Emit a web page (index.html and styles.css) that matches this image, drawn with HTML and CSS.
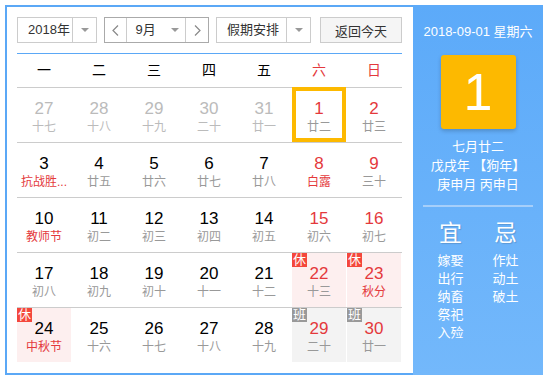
FILE: index.html
```html
<!DOCTYPE html>
<html lang="zh-CN">
<head>
    <meta charset="UTF-8">
    <meta name="viewport" content="width=device-width, initial-scale=1.0">
    <title>万年历</title>
    <link rel="stylesheet" href="styles.css">
</head>
<body>
    <div class="calendar">
        <div class="main">
            <div class="toolbar">
                <div class="select year">
                    <span class="select-text">2018年</span>
                    <span class="select-arrow"><i class="caret"></i></span>
                </div>
                <div class="select month">
                    <span class="month-btn prev"><svg width="7" height="11" viewBox="0 0 7 11"><polyline points="6,0.5 1,5.5 6,10.5"/></svg></span>
                    <span class="month-text">9月</span>
                    <span class="month-arrow"><i class="caret"></i></span>
                    <span class="month-btn next"><svg width="7" height="11" viewBox="0 0 7 11"><polyline points="1,0.5 6,5.5 1,10.5"/></svg></span>
                </div>
                <div class="select holiday">
                    <span class="select-text">假期安排</span>
                    <span class="select-arrow"><i class="caret"></i></span>
                </div>
                <button class="today-btn">返回今天</button>
            </div>

            <div class="weekdays">
                <span>一</span><span>二</span><span>三</span><span>四</span><span>五</span>
                <span class="red">六</span><span class="red">日</span>
            </div>

            <div class="week">
                <div class="day other"><div class="num">27</div><div class="lunar">十七</div></div>
                <div class="day other"><div class="num">28</div><div class="lunar">十八</div></div>
                <div class="day other"><div class="num">29</div><div class="lunar">十九</div></div>
                <div class="day other"><div class="num">30</div><div class="lunar">二十</div></div>
                <div class="day other"><div class="num">31</div><div class="lunar">廿一</div></div>
                <div class="day weekend today"><div class="num">1</div><div class="lunar">廿二</div></div>
                <div class="day weekend"><div class="num">2</div><div class="lunar">廿三</div></div>
            </div>
            <div class="week">
                <div class="day"><div class="num">3</div><div class="lunar fest">抗战胜...</div></div>
                <div class="day"><div class="num">4</div><div class="lunar">廿五</div></div>
                <div class="day"><div class="num">5</div><div class="lunar">廿六</div></div>
                <div class="day"><div class="num">6</div><div class="lunar">廿七</div></div>
                <div class="day"><div class="num">7</div><div class="lunar">廿八</div></div>
                <div class="day weekend"><div class="num">8</div><div class="lunar fest">白露</div></div>
                <div class="day weekend"><div class="num">9</div><div class="lunar">三十</div></div>
            </div>
            <div class="week">
                <div class="day"><div class="num">10</div><div class="lunar fest">教师节</div></div>
                <div class="day"><div class="num">11</div><div class="lunar">初二</div></div>
                <div class="day"><div class="num">12</div><div class="lunar">初三</div></div>
                <div class="day"><div class="num">13</div><div class="lunar">初四</div></div>
                <div class="day"><div class="num">14</div><div class="lunar">初五</div></div>
                <div class="day weekend"><div class="num">15</div><div class="lunar">初六</div></div>
                <div class="day weekend"><div class="num">16</div><div class="lunar">初七</div></div>
            </div>
            <div class="week">
                <div class="day"><div class="num">17</div><div class="lunar">初八</div></div>
                <div class="day"><div class="num">18</div><div class="lunar">初九</div></div>
                <div class="day"><div class="num">19</div><div class="lunar">初十</div></div>
                <div class="day"><div class="num">20</div><div class="lunar">十一</div></div>
                <div class="day"><div class="num">21</div><div class="lunar">十二</div></div>
                <div class="day weekend rest"><span class="badge">休</span><div class="num">22</div><div class="lunar">十三</div></div>
                <div class="day weekend rest"><span class="badge">休</span><div class="num">23</div><div class="lunar fest">秋分</div></div>
            </div>
            <div class="week">
                <div class="day rest"><span class="badge">休</span><div class="num">24</div><div class="lunar fest">中秋节</div></div>
                <div class="day"><div class="num">25</div><div class="lunar">十六</div></div>
                <div class="day"><div class="num">26</div><div class="lunar">十七</div></div>
                <div class="day"><div class="num">27</div><div class="lunar">十八</div></div>
                <div class="day"><div class="num">28</div><div class="lunar">十九</div></div>
                <div class="day weekend work"><span class="badge">班</span><div class="num">29</div><div class="lunar">二十</div></div>
                <div class="day weekend work"><span class="badge">班</span><div class="num">30</div><div class="lunar">廿一</div></div>
            </div>
        </div>

        <div class="side">
            <div class="side-date">2018-09-01 星期六</div>
            <div class="big-day">1</div>
            <div class="side-info">
                <div>七月廿二</div>
                <div>戊戌年 【狗年】</div>
                <div>庚申月 丙申日</div>
            </div>
            <div class="divider"></div>
            <div class="yiji">
                <div class="yiji-col">
                    <div class="yiji-title">宜</div>
                    <div>嫁娶</div>
                    <div>出行</div>
                    <div>纳畜</div>
                    <div>祭祀</div>
                    <div>入殓</div>
                </div>
                <div class="yiji-col">
                    <div class="yiji-title">忌</div>
                    <div>作灶</div>
                    <div>动土</div>
                    <div>破土</div>
                </div>
            </div>
        </div>
    </div>
</body>
</html>
```

FILE: styles.css
```css
body {
    margin: 5px;
    padding: 0;
    font-family: "Liberation Sans", "Noto Sans CJK SC", sans-serif;
    background-color: #fff;
    color: #000;
}
.calendar {
    display: flex;
    width: 538px;
    height: 370px;
    box-sizing: border-box;
    border: 2px solid #5ba8f6;
}
.main {
    width: 406px;
    padding: 10px 11px 0 10px;
    box-sizing: border-box;
}

/* 顶部工具栏 */
.toolbar {
    display: flex;
    height: 26px;
    font-size: 13px;
    color: #333;
}
.select {
    display: flex;
    height: 26px;
    box-sizing: border-box;
    border: 1px solid #ccc;
    line-height: 24px;
    background-color: #fff;
}
.select-text {
    flex: none;
    padding-left: 10px;
    box-sizing: border-box;
    border-right: 1px solid #ccc;
    white-space: nowrap;
    overflow: hidden;
}
.select-arrow {
    display: flex;
    align-items: center;
    justify-content: center;
    flex: 1;
}
.caret {
    display: block;
    width: 0;
    height: 0;
    border-top: 4px solid #999;
    border-left: 4px solid transparent;
    border-right: 4px solid transparent;
}
.year {
    width: 80px;
}
.year .select-text {
    width: 55px;
}
.month {
    width: 105px;
    margin-left: 7px;
    border-color: #aaa;
}
.month-btn {
    display: flex;
    align-items: center;
    justify-content: center;
    width: 21px;
}
.month-btn svg {
    fill: none;
    stroke: #888;
    stroke-width: 1.2;
}
.prev {
    border-right: 1px solid #ccc;
}
.next {
    border-left: 1px solid #ccc;
    width: 22px;
}
.month-text {
    width: 38px;
    text-align: center;
}
.month-arrow {
    display: flex;
    align-items: center;
    justify-content: center;
    width: 21px;
}
.holiday {
    width: 95px;
    margin-left: 7px;
}
.holiday .select-text {
    width: 70px;
}
.today-btn {
    width: 82px;
    height: 26px;
    margin-left: 9px;
    padding: 0;
    border: 1px solid #ccc;
    background-color: #f5f5f5;
    font-family: inherit;
    font-size: 13px;
    color: #333;
}

/* 日历表格 */
.weekdays {
    display: grid;
    grid-template-columns: repeat(7, 54px);
    column-gap: 1px;
    margin-top: 10px;
    border-top: 1px solid #5ba8f6;
    height: 33px;
    line-height: 33px;
    text-align: center;
    font-size: 14px;
}
.red {
    color: #e4393c;
}
.week {
    display: grid;
    grid-template-columns: repeat(7, 54px);
    column-gap: 1px;
    border-top: 1px solid #ccc;
}
.day {
    position: relative;
    height: 54px;
    padding-top: 11px;
    box-sizing: border-box;
    text-align: center;
}
.num {
    font-size: 17px;
    line-height: 20px;
}
.lunar {
    font-size: 12px;
    line-height: 16px;
    color: #999;
    white-space: nowrap;
}
.weekend .num {
    color: #e4393c;
}
.lunar.fest {
    color: #e4393c;
}
.other .num,
.other .lunar {
    color: #bbb;
}
.rest {
    background-color: #fdefef;
}
.work {
    background-color: #f3f3f3;
}
.badge {
    position: absolute;
    left: 0;
    top: 0;
    width: 15px;
    height: 14px;
    font-size: 13px;
    line-height: 14px;
    color: #fff;
    background-color: #f4473c;
}
.work .badge {
    background-color: #999;
}
.today::after {
    content: "";
    position: absolute;
    left: 0;
    right: 0;
    top: -1px;
    bottom: 0;
    border: 4px solid #fdb900;
}

/* 右侧详情 */
.side {
    width: 130px;
    margin: -2px -2px -2px 0;
    padding-top: 17px;
    box-sizing: border-box;
    background: linear-gradient(#5caaf9, #73b8fb);
    color: #fff;
    text-align: center;
    font-size: 13px;
}
.side-date {
    line-height: 20px;
}
.big-day {
    width: 75px;
    height: 74px;
    margin: 13px auto 0;
    border-radius: 3px;
    background-color: #fdb900;
    box-shadow: 0 2px 4px rgba(0, 0, 0, 0.2);
    font-size: 52px;
    line-height: 74px;
}
.side-info {
    margin-top: 8px;
    line-height: 19px;
}
.divider {
    height: 2px;
    margin: 11px 10px 0;
    background-color: #a6cffa;
}
.yiji {
    display: grid;
    grid-template-columns: 1fr 1fr;
    margin: 11px 10px 0;
    line-height: 18px;
}
.yiji-title {
    font-size: 23px;
    line-height: 30px;
    margin-bottom: 4px;
    text-shadow: 1px 1px 1px rgba(0, 0, 0, 0.15);
}
```
